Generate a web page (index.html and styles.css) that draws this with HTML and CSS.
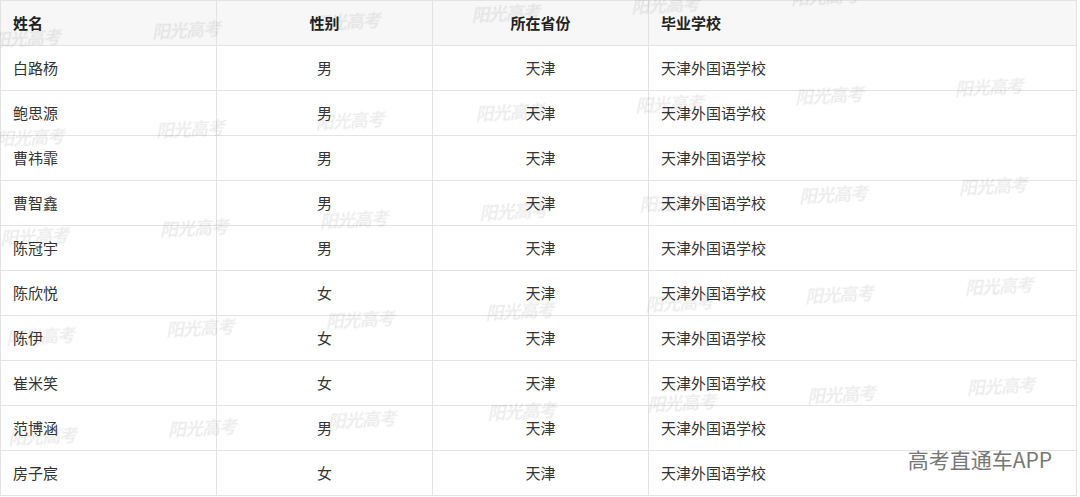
FILE: index.html
```html
<!DOCTYPE html>
<html lang="zh-CN">
<head>
    <meta charset="UTF-8">
    <meta name="viewport" content="width=device-width, initial-scale=1.0">
    <title>天津外国语学校名单</title>
    <link rel="stylesheet" href="styles.css">
</head>
<body>
    <div class="page">
        <table class="list">
            <colgroup>
                <col class="c-name">
                <col class="c-sex">
                <col class="c-prov">
                <col>
            </colgroup>
            <thead>
                <tr>
                    <th class="left">姓名</th>
                    <th>性别</th>
                    <th>所在省份</th>
                    <th class="left">毕业学校</th>
                </tr>
            </thead>
            <tbody>
                <tr><td class="left">白路杨</td><td>男</td><td>天津</td><td class="left">天津外国语学校</td></tr>
                <tr><td class="left">鲍思源</td><td>男</td><td>天津</td><td class="left">天津外国语学校</td></tr>
                <tr><td class="left">曹祎霏</td><td>男</td><td>天津</td><td class="left">天津外国语学校</td></tr>
                <tr><td class="left">曹智鑫</td><td>男</td><td>天津</td><td class="left">天津外国语学校</td></tr>
                <tr><td class="left">陈冠宇</td><td>男</td><td>天津</td><td class="left">天津外国语学校</td></tr>
                <tr><td class="left">陈欣悦</td><td>女</td><td>天津</td><td class="left">天津外国语学校</td></tr>
                <tr><td class="left">陈伊</td><td>女</td><td>天津</td><td class="left">天津外国语学校</td></tr>
                <tr><td class="left">崔米笑</td><td>女</td><td>天津</td><td class="left">天津外国语学校</td></tr>
                <tr><td class="left">范博涵</td><td>男</td><td>天津</td><td class="left">天津外国语学校</td></tr>
                <tr><td class="left">房子宸</td><td>女</td><td>天津</td><td class="left">天津外国语学校</td></tr>
            </tbody>
        </table>

        <!-- 水印 -->
        <div class="watermarks">
            <div class="wm-row"><span>阳光高考</span><span>阳光高考</span><span>阳光高考</span><span>阳光高考</span><span>阳光高考</span><span>阳光高考</span><span>阳光高考</span></div>
            <div class="wm-row"><span>阳光高考</span><span>阳光高考</span><span>阳光高考</span><span>阳光高考</span><span>阳光高考</span><span>阳光高考</span><span>阳光高考</span></div>
            <div class="wm-row"><span>阳光高考</span><span>阳光高考</span><span>阳光高考</span><span>阳光高考</span><span>阳光高考</span><span>阳光高考</span><span>阳光高考</span></div>
            <div class="wm-row"><span>阳光高考</span><span>阳光高考</span><span>阳光高考</span><span>阳光高考</span><span>阳光高考</span><span>阳光高考</span><span>阳光高考</span></div>
            <div class="wm-row"><span>阳光高考</span><span>阳光高考</span><span>阳光高考</span><span>阳光高考</span><span>阳光高考</span><span>阳光高考</span><span>阳光高考</span></div>
        </div>

        <div class="brand">高考直通车APP</div>
    </div>
</body>
</html>
```

FILE: styles.css
```css
* { margin: 0; padding: 0; box-sizing: border-box; }
body { font-family: "Noto Sans CJK SC", "Noto Sans", sans-serif; background-color: #fff; color: #333; }
.page { position: relative; width: 1080px; height: 497px; overflow: hidden; }

.list { width: 1077px; border-collapse: collapse; table-layout: fixed; font-size: 15px; }
.list col.c-name, .list col.c-sex, .list col.c-prov { width: 216px; }
.list th, .list td { height: 45px; border: 1px solid #e3e3e3; text-align: center; vertical-align: middle; line-height: 20px; }
.list th { background-color: #f7f7f7; font-weight: bold; color: #222; }
.list .left { text-align: left; padding-left: 12px; }
.list td { color: #333; }

.watermarks { position: absolute; left: 0; top: 0; width: 100%; height: 100%; pointer-events: none; }
.wm-row { position: absolute; left: -8px; display: flex; gap: 84px; transform: rotate(-3deg); transform-origin: left center; white-space: nowrap; }
.wm-row:nth-child(1) { top: 26px; }
.wm-row:nth-child(2) { top: 125px; left: -4px; }
.wm-row:nth-child(3) { top: 224px; left: 0; }
.wm-row:nth-child(4) { top: 324px; left: 6px; }
.wm-row:nth-child(5) { top: 424px; left: 8px; }
.wm-row span { width: 76px; font-size: 18px; font-weight: bold; font-style: italic; color: rgba(0, 0, 0, 0.075); filter: blur(0.5px); letter-spacing: -1px; }

.brand { position: absolute; right: 28px; top: 444px; font-size: 21px; color: #777; text-shadow: 0 0 2px #fff, 0 0 2px #fff; }
```
